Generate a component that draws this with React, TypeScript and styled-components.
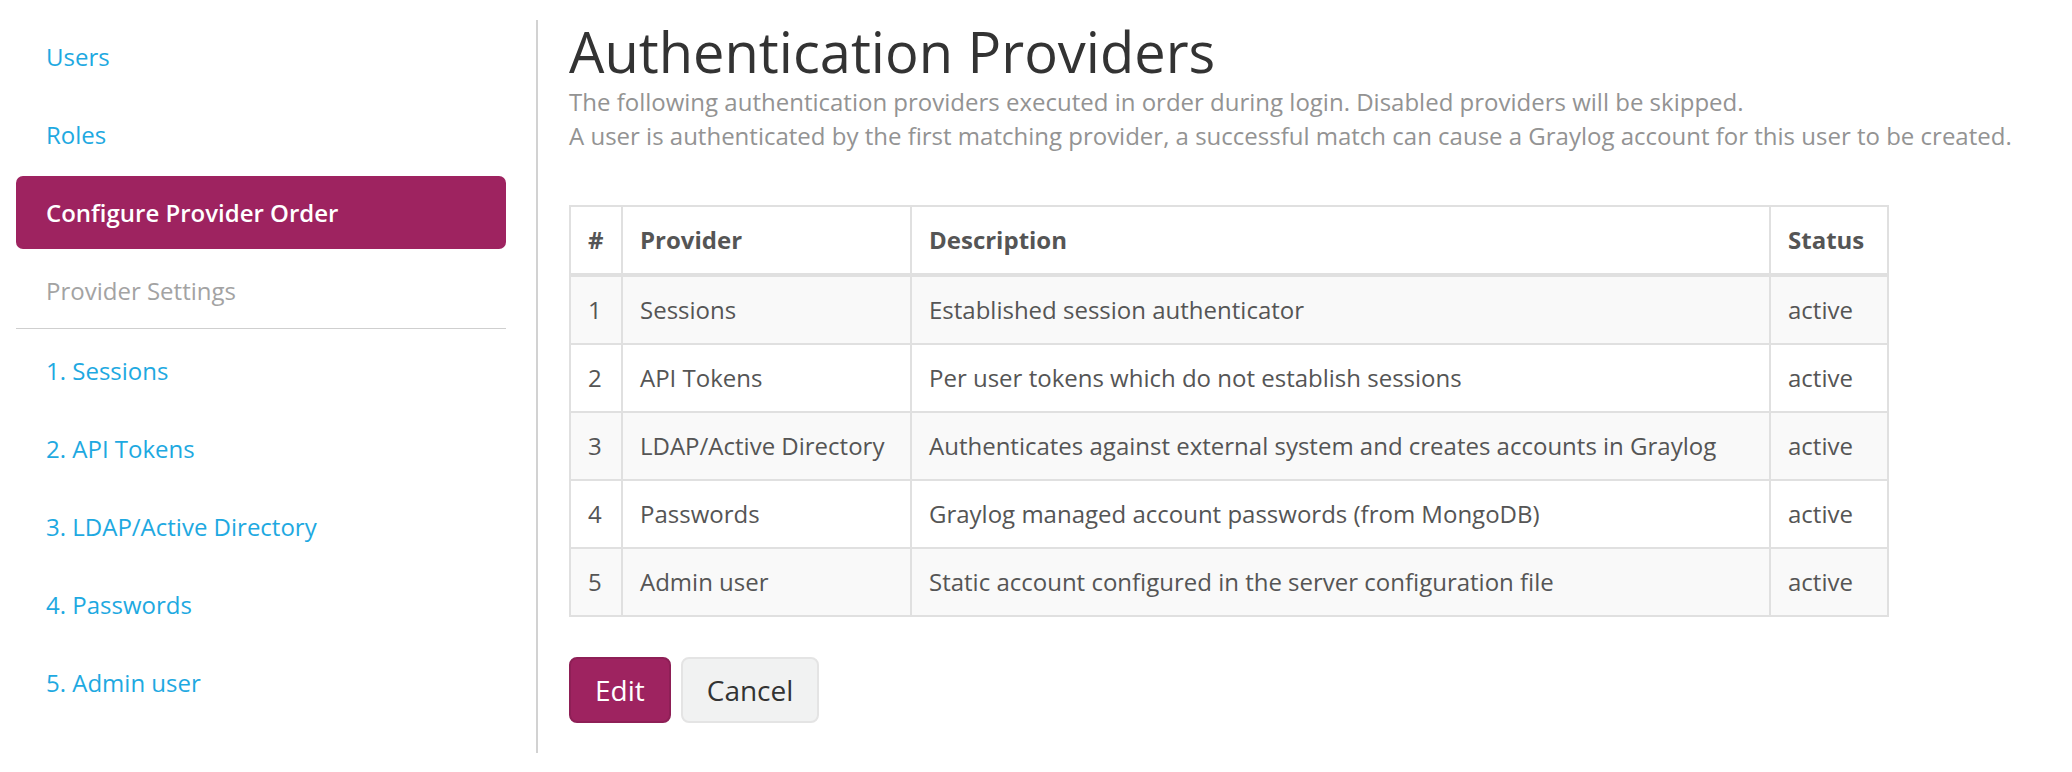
import React from "react";
import styled, { createGlobalStyle } from "styled-components";

const GlobalStyle = createGlobalStyle`
  html, body {
    margin: 0;
    padding: 0;
    background: #fff;
    font-family: "Open Sans", "Noto Sans", sans-serif;
  }
`;

const Page = styled.div`
  display: flex;
  align-items: flex-start;
  padding-top: 20px;
`;

const Sidebar = styled.aside`
  box-sizing: border-box;
  width: 538px;
  height: 733px;
  padding-left: 16px;
  border-right: 2px solid #d2d2d2;
`;

const Nav = styled.ul`
  list-style: none;
  margin: 0;
  padding: 0;
  width: 490px;
  display: flex;
  flex-direction: column;
  gap: 5px;
`;

const NavItem = styled.li<{ $active?: boolean; $muted?: boolean }>`
  box-sizing: border-box;
  height: 73px;
  padding: 19px 30px;
  font-size: 24px;
  line-height: 35px;
  border-radius: 7px;
  color: ${p => (p.$active ? "#fff" : p.$muted ? "#a3a3a3" : "#1ea9e1")};
  background: ${p => (p.$active ? "#9e2360" : "transparent")};
  font-weight: ${p => (p.$active ? 600 : 400)};
  cursor: ${p => (p.$muted ? "default" : "pointer")};
`;

const Divider = styled.li`
  height: 1px;
  margin-top: -4px;
  background: #cfcfcf;
`;

const Content = styled.main`
  padding-left: 31px;
`;

const Title = styled.h1`
  margin: 0;
  font-size: 56px;
  line-height: 62px;
  font-weight: 400;
  color: #333;
`;

const Description = styled.p`
  margin: 3px 0 0;
  font-size: 24px;
  line-height: 34px;
  color: #939393;
`;

const Table = styled.table`
  margin-top: 52px;
  border-collapse: collapse;
  table-layout: fixed;
  width: 1318px;
  font-size: 24px;
  line-height: 34px;
  color: #555;
`;

const HeadCell = styled.th<{ $w: number }>`
  box-sizing: border-box;
  text-align: left;
  font-weight: 700;
  padding: 16px 17px;
  border: 2px solid #e0e0e0;
  border-bottom-width: 4px;
  width: ${p => p.$w}px;
  white-space: nowrap;
`;

const Row = styled.tr<{ $striped: boolean }>`
  background: ${p => (p.$striped ? "#f9f9f9" : "#fff")};
`;

const Cell = styled.td`
  padding: 16px 17px;
  border: 2px solid #e0e0e0;
  white-space: nowrap;
`;

const Actions = styled.div`
  display: flex;
  gap: 10px;
  margin-top: 40px;
`;

const Button = styled.button<{ $primary?: boolean }>`
  box-sizing: border-box;
  height: 66px;
  padding: 0 24px;
  font-family: "Open Sans", "Noto Sans", sans-serif;
  font-size: 28px;
  border-radius: 8px;
  cursor: pointer;
  color: ${p => (p.$primary ? "#fff" : "#333")};
  background: ${p => (p.$primary ? "#9e2360" : "#f1f2f2")};
  border: 2px solid ${p => (p.$primary ? "#8e1f56" : "#e4e4e4")};
`;

const providers = [
  { name: "Sessions", description: "Established session authenticator" },
  { name: "API Tokens", description: "Per user tokens which do not establish sessions" },
  { name: "LDAP/Active Directory", description: "Authenticates against external system and creates accounts in Graylog" },
  { name: "Passwords", description: "Graylog managed account passwords (from MongoDB)" },
  { name: "Admin user", description: "Static account configured in the server configuration file" },
];

export default function App() {
  return (
    <>
      <GlobalStyle />
      <Page>
        <Sidebar>
          <Nav>
            <NavItem>Users</NavItem>
            <NavItem>Roles</NavItem>
            <NavItem $active>Configure Provider Order</NavItem>
            <NavItem $muted>Provider Settings</NavItem>
            <Divider />
            {providers.map((p, i) => (
              <NavItem key={p.name}>{`${i + 1}. ${p.name}`}</NavItem>
            ))}
          </Nav>
        </Sidebar>
        <Content>
          <Title>Authentication Providers</Title>
          <Description>
            The following authentication providers executed in order during login. Disabled providers will be skipped.
            <br />
            A user is authenticated by the first matching provider, a successful match can cause a Graylog account for this user to be created.
          </Description>
          <Table>
            <thead>
              <tr>
                <HeadCell $w={52}>#</HeadCell>
                <HeadCell $w={289}>Provider</HeadCell>
                <HeadCell $w={859}>Description</HeadCell>
                <HeadCell $w={118}>Status</HeadCell>
              </tr>
            </thead>
            <tbody>
              {providers.map((p, i) => (
                <Row key={p.name} $striped={i % 2 === 0}>
                  <Cell>{i + 1}</Cell>
                  <Cell>{p.name}</Cell>
                  <Cell>{p.description}</Cell>
                  <Cell>active</Cell>
                </Row>
              ))}
            </tbody>
          </Table>
          <Actions>
            <Button $primary>Edit</Button>
            <Button>Cancel</Button>
          </Actions>
        </Content>
      </Page>
    </>
  );
}
